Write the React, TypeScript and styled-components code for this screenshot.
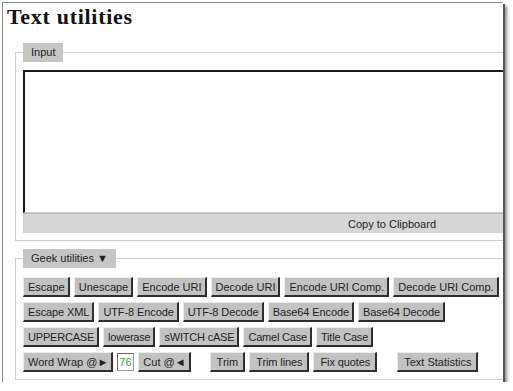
import styled, { createGlobalStyle } from "styled-components";

const GlobalStyle = createGlobalStyle`
  html, body {
    margin: 0;
    padding: 0;
    background: #fff;
  }
  body {
    font-family: "Liberation Sans", Arial, sans-serif;
    color: #222;
  }
`;

const Window = styled.div`
  margin: 2px 0 0 2px;
  width: 500px;
  height: 379px;
  border-top: 1px solid #8a8a8a;
  border-left: 1px solid #8a8a8a;
  box-shadow: 2px 2px 0 #555, 4px 4px 3px rgba(0, 0, 0, 0.45);
  overflow: hidden;
  background: #fff;
`;

const Page = styled.div`
  width: 762px;
  padding: 0 0 0 4px;
`;

const Title = styled.h1`
  margin: 1px 0 0;
  font-family: "Liberation Serif", "Times New Roman", serif;
  font-weight: bold;
  font-size: 22px;
  line-height: 26px;
  letter-spacing: 0.7px;
  color: #111;
`;

const Fieldset = styled.fieldset<{ $top: number }>`
  margin: ${(p) => p.$top}px 0 0 8px;
  padding: 8px 7px 7px 7px;
  border: 1px solid #cfcfcf;
  min-width: 0;
`;

const Legend = styled.legend`
  background: #c6c6c6;
  padding: 0 8px;
  height: 19px;
  line-height: 19px;
  font-size: 11px;
  color: #222;
  margin-left: 0;
`;

const Editor = styled.textarea`
  display: block;
  box-sizing: border-box;
  width: 100%;
  height: 143px;
  margin: 0;
  resize: none;
  border-style: solid;
  border-width: 2px 1px 1px 2px;
  border-color: #1a1a1a #d0d0d0 #d0d0d0 #1a1a1a;
  background: #fff;
`;

const CopyBar = styled.div`
  height: 20px;
  line-height: 20px;
  text-align: center;
  background: #d6d6d6;
  border-top: 1px solid #b8b8b8;
  box-sizing: border-box;
  font-size: 11px;
  color: #222;
`;

const Rows = styled.div`
  display: flex;
  flex-direction: column;
  gap: 5px;
  padding-top: 1px;
`;

const Row = styled.div`
  display: flex;
  align-items: center;
  gap: 4px;
`;

const Button = styled.button<{ $gapBefore?: number; $wide?: boolean; $spacing?: number }>`
  height: 20px;
  box-sizing: border-box;
  margin: 0 0 0 ${(p) => p.$gapBefore ?? 0}px;
  padding: ${(p) => (p.$wide ? "0 5px 0 6px" : "0 3px 0 4px")};
  background: #c2c2c2;
  border-style: solid;
  border-width: 1px 2px 2px 1px;
  border-color: #ececec #2e2e2e #2e2e2e #ececec;
  font-family: "Liberation Sans", Arial, sans-serif;
  font-size: 11px;
  letter-spacing: ${(p) => p.$spacing ?? 0}px;
  color: #222;
  white-space: nowrap;
  cursor: pointer;
`;

const NumberBox = styled.input`
  width: 17px;
  height: 18px;
  box-sizing: border-box;
  margin: 0;
  padding: 0 1px;
  border: 1px solid #9a9a9a;
  border-top-color: #666;
  border-left-color: #666;
  font-family: "Liberation Sans", Arial, sans-serif;
  font-size: 11px;
  color: #3a9a3a;
  background: #fff;
`;

const rows: { spacing: number; labels: string[] }[] = [
  {
    spacing: 0,
    labels: ["Escape", "Unescape", "Encode URI", "Decode URI", "Encode URI Comp.", "Decode URI Comp."],
  },
  {
    spacing: -0.1,
    labels: ["Escape XML", "UTF-8 Encode", "UTF-8 Decode", "Base64 Encode", "Base64 Decode"],
  },
  {
    spacing: -0.2,
    labels: ["UPPERCASE", "lowerase", "sWITCH cASE", "Camel Case", "Title Case"],
  },
];

export default function App() {
  return (
    <>
      <GlobalStyle />
      <Window>
        <Page>
          <Title>Text utilities</Title>
          <Fieldset $top={13}>
            <Legend>Input</Legend>
            <Editor />
            <CopyBar>Copy to Clipboard</CopyBar>
          </Fieldset>
          <Fieldset $top={8}>
            <Legend>Geek utilities ▼</Legend>
            <Rows>
              {rows.map((r, i) => (
                <Row key={i}>
                  {r.labels.map((label) => (
                    <Button key={label} $spacing={r.spacing}>
                      {label}
                    </Button>
                  ))}
                </Row>
              ))}
              <Row>
                <Button>Word Wrap @►</Button>
                <NumberBox defaultValue="76" />
                <Button>Cut @◄</Button>
                <Button $gapBefore={15} $wide>
                  Trim
                </Button>
                <Button $wide $spacing={-0.1}>
                  Trim lines
                </Button>
                <Button $wide $spacing={-0.1}>
                  Fix quotes
                </Button>
                <Button $gapBefore={16} $wide>
                  Text Statistics
                </Button>
              </Row>
            </Rows>
          </Fieldset>
        </Page>
      </Window>
    </>
  );
}
